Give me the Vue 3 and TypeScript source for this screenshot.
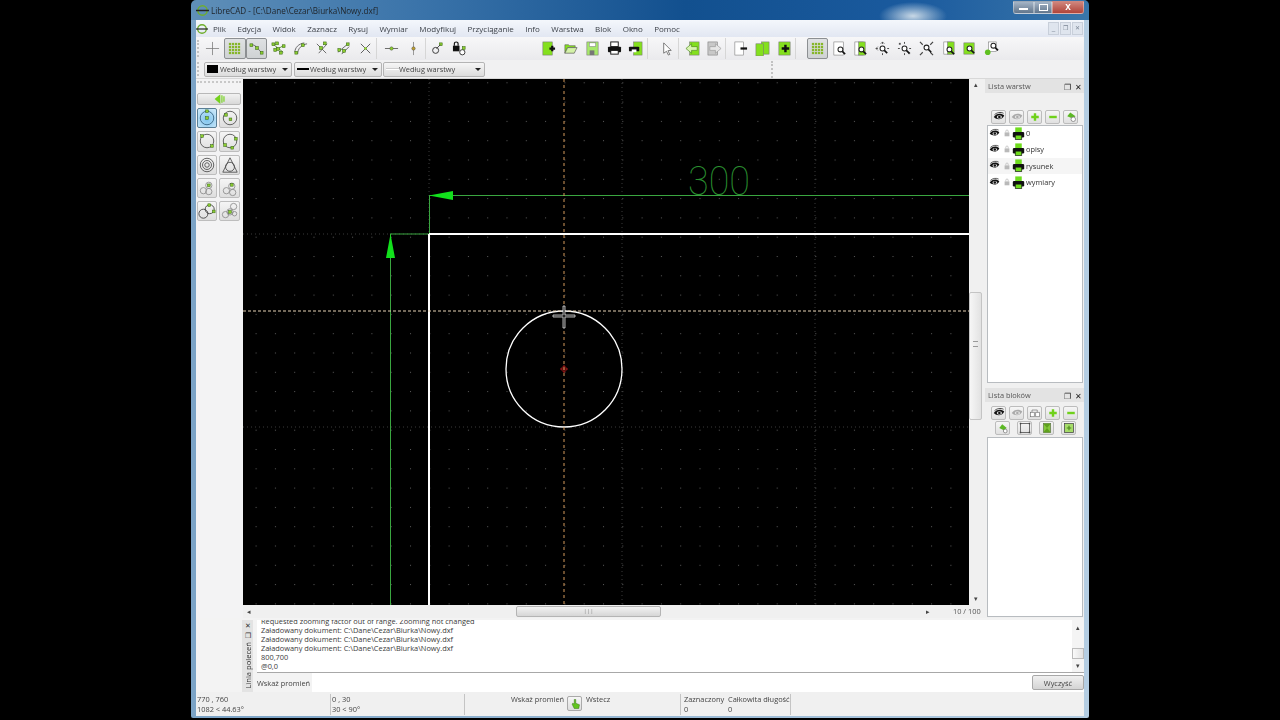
<template>
  <div class="page">
    <div class="window">
      <div class="titlebar">
        <svg class="app-ic" viewBox="0 0 14 14"><circle cx="7" cy="7" r="5" fill="none" stroke="#6fae2c" stroke-width="1.6" /><path d="M0 7h14" stroke="#222" stroke-width="1.6" /></svg>
        <span class="title-text">LibreCAD - [C:\Dane\Cezar\Biurka\Nowy.dxf]</span>
        <div class="win-btns">
          <span class="wb wb-min"><i></i></span>
          <span class="wb wb-max"><i></i></span>
          <span class="wb wb-close">x</span>
        </div>
      </div>

      <div class="menubar">
        <svg class="menu-ic" viewBox="0 0 14 14"><circle cx="7" cy="7" r="5" fill="none" stroke="#6fae2c" stroke-width="1.6" /><path d="M0 7h14" stroke="#222" stroke-width="1.4" /></svg>
        <span v-for="m in menus" :key="m" class="menu-item">{{ m }}</span>
        <div class="mdi-btns">
          <span class="mdi">_</span>
          <span class="mdi mdi-sm">❐</span>
          <span class="mdi mdi-sm">✕</span>
        </div>
      </div>

      <div class="toolbar">
        <i class="grip"></i>
        <template v-for="(group, gi) in toolGroups" :key="gi">
          <div class="tb-group" :class="group.cls">
            <span v-for="(t, ti) in group.items" :key="ti" class="tb" :class="{ on: t.startsWith('*') }">
              <svg viewBox="0 0 16 16" v-html="icons[t.replace('*', '')]"></svg>
            </span>
          </div>
        </template>
      </div>

      <div class="optbar">
        <i class="grip small"></i>
        <div class="combo c1"><span class="swatch"></span>Według warstwy<b class="caret"></b></div>
        <div class="combo c2"><span class="thick"></span>Według warstwy<b class="caret"></b></div>
        <div class="combo c3"><span class="thin"></span>Według warstwy<b class="caret"></b></div>
        <i class="grip vgrip"></i>
      </div>

      <div class="workspace">
        <aside class="left-tools">
          <div class="dots"></div>
          <button class="back-btn">
            <svg viewBox="0 0 16 12"><path d="M9 0v12L2 6z" fill="#74d11c" /><path d="M11 1.5v9M13.5 2.5v7" stroke="#74d11c" stroke-width="1.4" /></svg>
          </button>
          <div class="circle-grid">
            <span v-for="(c, i) in circleTools" :key="i" class="cbtn" :class="{ active: i === 0 }">
              <svg viewBox="0 0 20 20" v-html="c"></svg>
            </span>
          </div>
        </aside>

        <div class="center">
          <div class="canvas-row">
            <svg class="canvas" viewBox="0 0 726 526" width="726" height="526">
              <defs>
                <pattern id="gridDots" x="12.6" y="3.3" width="19.3" height="19.3" patternUnits="userSpaceOnUse">
                  <rect width="1" height="1" fill="#5c5c5c" />
                </pattern>
              </defs>
              <rect width="726" height="526" fill="#000" />
              <rect width="726" height="526" fill="url(#gridDots)" />
              <!-- meta grid -->
              <path d="M186 0V526M379 0V526M572 0V526M0 155H726M0 348H726" stroke="#3a3a3a" stroke-width="1" stroke-dasharray="1 3" fill="none" />
              <!-- dimensions -->
              <path d="M186 116.5H726M186.5 116V155M147 155H186M147.5 155V526" stroke="#3aa640" stroke-width="1" fill="none" />
              <path d="M186 116.5L210 112V121Z" fill="#12e01c" />
              <path d="M147.5 155L143 179H152Z" fill="#12e01c" />
              <text x="445" y="116" class="dim-text" textLength="62" lengthAdjust="spacingAndGlyphs">300</text>
              <!-- geometry -->
              <path d="M186 155H726M186 155V526" stroke="#fff" stroke-width="2" fill="none" />
              <circle cx="321" cy="290" r="58" fill="none" stroke="#fff" stroke-width="1.3" />
              <path d="M317 290h8M321 286v8" stroke="#a01818" stroke-width="1" />
              <circle cx="321" cy="290" r="2.5" fill="none" stroke="#a01818" stroke-width=".8" />
              <!-- crosshair -->
              <path d="M321 0V526" stroke="#d49a5c" stroke-width="1" stroke-dasharray="3 3" />
              <path d="M0 232H726" stroke="#e6d2b4" stroke-width="1" stroke-dasharray="3 2" />
              <path d="M320 227h2v9h10v2h-10v11h-2v-11h-10v-2h10z" fill="#222" stroke="#ddd" stroke-width=".8" />
            </svg>
            <div class="vscroll">
              <span class="arr">▴</span>
              <div class="v-track"><div class="v-thumb"><i></i></div></div>
              <span class="arr">▾</span>
            </div>
          </div>
          <div class="hscroll">
            <span class="harr">◂</span>
            <div class="h-track"><div class="h-thumb">|||</div></div>
            <span class="harr">▸</span>
            <span class="grid-label">10 / 100</span>
          </div>
        </div>

        <aside class="docks">
          <div class="dock-title">Lista warstw<span class="dock-btns"><em>❐</em><em>✕</em></span></div>
          <div class="dock-row first">
            <span v-for="b in layerBtns" :key="b" class="dbtn"><svg viewBox="0 0 16 16" v-html="icons[b]"></svg></span>
          </div>
          <ul class="layer-list">
            <li v-for="l in layers" :key="l" :class="{ hl: l === 'rysunek' }">
              <svg class="li-eye" viewBox="0 0 16 16" v-html="icons.eye"></svg>
              <svg class="li-lock" viewBox="0 0 10 12"><rect x="1" y="5" width="8" height="6.5" fill="#b9b9b9" /><path d="M3 5V3a2 2 0 0 1 4 0v2" fill="none" stroke="#b9b9b9" stroke-width="1.2" /></svg>
              <svg class="li-print" viewBox="0 0 16 16" v-html="icons.printer"></svg>
              <span>{{ l }}</span>
            </li>
          </ul>
          <div class="dock-title second">Lista bloków<span class="dock-btns"><em>❐</em><em>✕</em></span></div>
          <div class="dock-row blocks">
            <span v-for="b in blockBtns1" :key="b" class="dbtn"><svg viewBox="0 0 16 16" v-html="icons[b]"></svg></span>
          </div>
          <div class="dock-row wide">
            <span v-for="b in blockBtns2" :key="b" class="dbtn"><svg viewBox="0 0 16 16" v-html="icons[b]"></svg></span>
          </div>
          <div class="block-list"></div>
        </aside>
      </div>

      <section class="cmd">
        <div class="cmd-strip">
          <span class="cmd-x">✕</span>
          <span class="cmd-r">❐</span>
          <span class="cmd-name">Linia poleceń</span>
        </div>
        <div class="cmd-main">
          <div class="log-wrap">
            <div class="log">
              <div v-for="(line, i) in logLines" :key="i">{{ line }}</div>
            </div>
            <div class="log-scroll">
              <span class="arr">▴</span>
              <div class="log-track"><div class="log-thumb"></div></div>
              <span class="arr">▾</span>
            </div>
          </div>
          <div class="input-row">
            <span class="prompt">Wskaż promień</span>
            <div class="input"></div>
            <button class="clear">Wyczyść</button>
          </div>
        </div>
      </section>

      <footer class="status">
        <div class="cell c-abs">770 , 760<br />1082 &lt; 44.63°</div>
        <div class="cell c-rel">0 , 30<br />30 &lt; 90°</div>
        <div class="cell c-mouse">
          <span class="mouse-left">Wskaż promień</span>
          <span class="mouse-btn"><svg viewBox="0 0 16 16" v-html="icons.hand"></svg></span>
          <span>Wstecz</span>
        </div>
        <div class="cell c-sel">
          <div class="sel-col first">Zaznaczony<br />0</div>
          <div class="sel-col">Całkowita długość<br />0</div>
        </div>
      </footer>
    </div>
  </div>
</template>

<script setup lang="ts">
const menus = ['Plik', 'Edycja', 'Widok', 'Zaznacz', 'Rysuj', 'Wymiar', 'Modyfikuj', 'Przyciąganie', 'Info', 'Warstwa', 'Blok', 'Okno', 'Pomoc']

const dot = (x: number, y: number) =>
  `<rect x="${x}" y="${y}" width="3" height="3" fill="#8ccf2e" stroke="#3d6a1c" stroke-width=".6"/>`
const ln = (d: string, c = '#555', w = 0.9) =>
  `<path d="${d}" fill="none" stroke="${c}" stroke-width="${w}"/>`
const mag = (x: number, y: number) =>
  `<circle cx="${x}" cy="${y}" r="2.6" fill="#fff" stroke="#222" stroke-width="1.1"/><path d="M${x + 2} ${y + 2}l3 3" stroke="#111" stroke-width="1.7"/>`
const page = (x: number, y: number, w: number, h: number, f: string) =>
  `<rect x="${x}" y="${y}" width="${w}" height="${h}" fill="${f}" stroke="#777" stroke-width=".6"/>`
const plus = (c: string) => `<path d="M8 3v10M3 8h10" stroke="${c}" stroke-width="3.2"/>`
const rays = ln('M1 8h2M13 8h2M8 1v2M8 13v2', '#444', 1)

const gridDots = (c: string) => {
  let s = ''
  for (let r = 0; r < 4; r++) for (let k = 0; k < 4; k++) s += `<rect x="${2 + k * 3.2}" y="${2 + r * 3.2}" width="2.4" height="2.4" fill="${c}"/>`
  return s
}

const icons: Record<string, string> = {
  free: ln('M8 1v14M1 8h14', '#777', 0.8),
  grid: gridDots('#86b62a'),
  snapEnd: ln('M3 4c4 0 6 4 10 8', '#555') + dot(1, 3) + dot(7, 6) + dot(12, 11),
  snapEnt: ln('M3 4l5 4 5 4M8 8l5-3', '#4c8a1c') + dot(1, 2) + dot(5, 1) + dot(6, 7) + dot(12, 4) + dot(9, 11) + dot(3, 8),
  snapCen: ln('M5 14c0-6 4-10 10-11M2 12c0-5 4-9 10-10', '#555') + dot(9, 3) + dot(2, 11),
  snapMid: ln('M3 3l10 10M14 3L5 13', '#555') + dot(6, 6) + dot(10, 1),
  snapDist: ln('M2 12L14 2M6 14L14 6', '#555') + dot(2, 8) + dot(7, 9) + dot(11, 2),
  snapX: ln('M3 3l10 10M13 3L3 13', '#555', 1) + `<circle cx="8" cy="8" r="1.4" fill="#8ccf2e"/>`,
  hLine: ln('M1 8h14', '#555') + `<circle cx="8" cy="8" r="1.8" fill="#8ccf2e" stroke="#444" stroke-width=".5"/>`,
  vLine: ln('M8 1v14', '#888') + `<circle cx="8" cy="8" r="1.8" fill="#c0a030" stroke="#444" stroke-width=".5"/>`,
  rel: `<circle cx="6" cy="10" r="3.2" fill="none" stroke="#333"/>` + dot(10, 2) + ln('M7 8l4-4', '#333'),
  lock: `<rect x="1" y="5" width="7" height="6" fill="#111"/><path d="M2.5 5V3a2 2 0 0 1 4 0v2" fill="none" stroke="#111" stroke-width="1.2"/><circle cx="11" cy="12" r="2.8" fill="#fff" stroke="#333"/>` + dot(11, 6),
  newDoc: page(2, 1, 10, 14, '#84e01e') + `<path d="M9 8h6M12 5v6" stroke="#111" stroke-width="2.4"/>`,
  open: `<path d="M2 4h4l1 1h6v2H5L2 13z" fill="#84e01e" stroke="#555" stroke-width=".6"/><path d="M5 7h10l-3 6H2z" fill="#d4f2a8" stroke="#555" stroke-width=".7"/>`,
  save: page(2, 1, 12, 14, '#a6e86a') + `<rect x="4.5" y="2" width="7" height="4" fill="#fff" stroke="#666" stroke-width=".5"/><rect x="5" y="10" width="5" height="5" fill="#777"/>`,
  print: `<rect x="4" y="1" width="8" height="5" fill="#fff" stroke="#111"/><rect x="1" y="6" width="14" height="6" rx="1" fill="#111"/><rect x="4" y="10" width="8" height="4" fill="#fff" stroke="#111"/>`,
  preview: page(6, 1, 9, 14, '#84e01e') + `<rect x="1" y="6" width="11" height="5" rx="1" fill="#111"/><rect x="4" y="9" width="5" height="3" fill="#fff"/>`,
  pointer: `<path d="M5 2v11l3-2 2 4 1.5-.7-2-4 3.5-.3z" fill="#fff" stroke="#555" stroke-width=".8"/>`,
  prevW: page(5, 1, 10, 14, '#84e01e') + `<path d="M1 8l6-5v3h6v4H7v3z" fill="#d8f4b0" stroke="#4a8a1a" stroke-width=".7"/>`,
  nextW: page(1, 1, 10, 14, '#c8c8c8') + `<path d="M15 8L9 3v3H3v4h6v3z" fill="#e6e6e6" stroke="#999" stroke-width=".7"/>`,
  docMinus: page(2, 1, 9, 14, '#fff') + `<path d="M8 8h7" stroke="#111" stroke-width="2.4"/>`,
  docs: page(7, 1, 8, 13, '#84e01e') + page(1, 3, 8, 13, '#84e01e'),
  docPlus: page(2, 1, 12, 14, '#84e01e') + `<path d="M5 8h8M9 4v8" stroke="#111" stroke-width="2.6"/>`,
  zoomPage: page(2, 1, 10, 14, '#fff') + mag(9, 9),
  zoomGreen: page(2, 1, 9, 14, '#fff') + page(6, 1, 7, 14, '#84e01e') + mag(9, 9),
  zoomIn: rays + ln('M1 8l2-2M1 8l2 2M8 1L6 3M8 1l2 2', '#555', 0.8) + mag(8, 8),
  zoomOut: rays + `<rect x="2" y="2" width="2" height="2" fill="#555"/><rect x="12" y="12" width="2" height="2" fill="#555"/>` + mag(8, 8),
  zoomFit: ln('M1 1l3 3M15 1l-3 3M1 15l3-3M15 15l-3-3', '#444', 1.2) + mag(8, 7),
  zoomWin: page(3, 1, 9, 13, '#fff') + page(7, 1, 7, 13, '#84e01e') + mag(9, 9),
  zoomPrev: page(2, 2, 11, 12, '#84e01e') + mag(8, 8),
  zoomPan: page(5, 1, 8, 10, '#fff') + `<circle cx="4" cy="12" r="3" fill="#5fbf20"/>` + mag(10, 5),
  eye: `<path d="M1 8c3-5 10-6 14-2-2 5-9 7-14 2z" fill="#111"/><ellipse cx="8.5" cy="8" rx="3.5" ry="2.3" fill="#ddd"/><circle cx="8.5" cy="8" r="1.7" fill="#111"/><path d="M2 5c3-3 8-4 12-2" stroke="#111" fill="none"/>`,
  eyeOff: `<path d="M1 8c3-5 10-6 14-2-2 5-9 7-14 2z" fill="#aaa"/><ellipse cx="8.5" cy="8" rx="3.5" ry="2.3" fill="#e6e6e6"/><circle cx="8.5" cy="8" r="1.7" fill="#aaa"/>`,
  plusG: plus('#6fd11b'),
  minusG: `<path d="M3 8h10" stroke="#6fd11b" stroke-width="3.2"/>`,
  attr: `<path d="M3 7l4-5 7 5-4 3z" fill="#5cb825"/><circle cx="11" cy="11" r="3" fill="#fff" stroke="#777"/>`,
  printer: `<rect x="4" y="0.5" width="8" height="7" fill="#6fdc1e"/><rect x="1" y="6" width="14" height="7" rx="1.5" fill="#111"/><rect x="4" y="10" width="8" height="5.5" fill="#6fdc1e" stroke="#111" stroke-width=".8"/>`,
  link: `<rect x="2" y="7" width="5" height="6" fill="#fff" stroke="#666" stroke-width=".8"/><rect x="9" y="7" width="5" height="6" fill="#fff" stroke="#666" stroke-width=".8"/><path d="M4 7V4h7v3" fill="none" stroke="#666" stroke-width=".8"/>`,
  blockA: `<path d="M3 8l4-5 6 5-4 3z" fill="#5cb825"/><circle cx="11" cy="12" r="2.5" fill="#fff" stroke="#777"/>`,
  blockB: `<rect x="2" y="2" width="12" height="12" fill="none" stroke="#444"/><rect x="1" y="1" width="2" height="2" fill="#444"/><rect x="13" y="1" width="2" height="2" fill="#444"/><rect x="1" y="13" width="2" height="2" fill="#444"/><rect x="13" y="13" width="2" height="2" fill="#444"/>`,
  blockC: `<rect x="3" y="2" width="10" height="12" fill="#84c83c" stroke="#555" stroke-width=".7"/><path d="M3 2h10L8 8zM3 14h10L8 8z" fill="#5fa01e"/>`,
  blockD: `<rect x="2" y="2" width="12" height="12" fill="#a6dd6a" stroke="#444"/><path d="M5 8h6M8 5v6" stroke="#4a8a1a" stroke-width="1.5"/>`,
  hand: `<path d="M7 2v6l-2-1-1 1 3 6h6l1-5-5-2V2z" fill="#62c61e" stroke="#2f6a10" stroke-width=".6"/>`,
}

const toolGroups = [
  { cls: 'g1', items: ['free', '*grid', '*snapEnd', 'snapEnt', 'snapCen', 'snapMid', 'snapDist', 'snapX'] },
  { cls: 'g2', items: ['hLine', 'vLine'] },
  { cls: 'g3', items: ['rel', 'lock'] },
  { cls: 'g4', items: ['newDoc', 'open', 'save', 'print', 'preview'] },
  { cls: 'g5', items: ['pointer'] },
  { cls: 'g6', items: ['prevW', 'nextW'] },
  { cls: 'g7', items: ['docMinus', 'docs', 'docPlus'] },
  { cls: 'g8', items: ['*grid', 'zoomPage', 'zoomGreen', 'zoomIn', 'zoomOut', 'zoomFit', 'zoomWin', 'zoomPrev', 'zoomPan'] },
]

const circ = (cx: number, cy: number, r: number, c = '#444') =>
  `<circle cx="${cx}" cy="${cy}" r="${r}" fill="none" stroke="${c}" stroke-width=".9"/>`

const circleTools = [
  circ(10, 10, 7.5, '#2c5a7a') + dot(8.5, 1) + dot(8.5, 8.5),
  circ(10, 10, 7.5) + dot(4, 5) + dot(9, 10),
  circ(10, 10, 7.5) + dot(3, 3) + dot(14, 14),
  circ(10, 10, 7.5) + dot(15, 6) + dot(3, 13) + dot(11, 16),
  circ(10, 10, 7.5) + circ(10, 10, 5) + circ(10, 10, 2.5),
  ln('M10 2L2 18H18Z', '#444') + circ(10, 12, 5),
  circ(6, 13, 3.5, '#888') + circ(12, 14, 3.5, '#888') + circ(12, 7, 3.5, '#888') + dot(10.5, 5.5),
  circ(6, 13, 3.5, '#888') + circ(13, 15, 3.5, '#888') + circ(12, 8, 3.5, '#888') + dot(10.5, 5),
  circ(6, 13, 5, '#333') + circ(13, 8, 5, '#333') + dot(11, 2) + dot(16, 9),
  circ(5, 14, 3.5, '#888') + circ(14, 5, 3.5, '#888') + circ(10, 11, 3.5, '#888') + circ(15, 13, 2.5, '#888') + dot(8.5, 9.5),
]

const layerBtns = ['eye', 'eyeOff', 'plusG', 'minusG', 'attr']
const blockBtns1 = ['eye', 'eyeOff', 'link', 'plusG', 'minusG']
const blockBtns2 = ['blockA', 'blockB', 'blockC', 'blockD']
const layers = ['0', 'opisy', 'rysunek', 'wymiary']

const logLines = [
  'Requested zooming factor out of range. Zooming not changed',
  'Załadowany dokument: C:\\Dane\\Cezar\\Biurka\\Nowy.dxf',
  'Załadowany dokument: C:\\Dane\\Cezar\\Biurka\\Nowy.dxf',
  'Załadowany dokument: C:\\Dane\\Cezar\\Biurka\\Nowy.dxf',
  '800,700',
  '@0,0',
]
</script>

<style>
html, body {
  margin: 0;
  background: #000;
}
</style>

<style scoped>
.page {
  width: 1280px;
  height: 720px;
  background: #000;
  overflow: hidden;
  padding-left: 191px;
  box-sizing: border-box;
}

/* source is a soft video frame */
.window {
  width: 898px;
  height: 718px;
  box-sizing: border-box;
  padding: 0 5px 2px;
  border-radius: 5px 5px 2px 2px;
  background:
    radial-gradient(ellipse 34px 14px at 722px 16px, #c8d8e6 0, rgba(200, 216, 230, 0) 100%),
    linear-gradient(90deg, #5f8fb8 0, #3b74aa 25%, #12508f 55%, #1a5a9e 80%, #3a76aa 100%) top / 100% 20px no-repeat,
    linear-gradient(90deg, #7ba3c6 0, #b4cde2 100%);
  font-family: "Open Sans", "Liberation Sans", sans-serif;
  font-size: 7.4px;
  color: #333;
  display: flex;
  flex-direction: column;
  filter: blur(.3px);
}

.titlebar {
  height: 20px;
  display: flex;
  align-items: center;
}
.app-ic {
  width: 13px;
  height: 13px;
  margin-right: 2px;
}
.title-text {
  color: #20262c;
  font-size: 8.1px;
}
.win-btns {
  margin-left: auto;
  margin-top: -6px;
  display: flex;
  height: 13px;
}
.wb {
  display: flex;
  align-items: center;
  justify-content: center;
  border: 1px solid rgba(255, 255, 255, .35);
  box-sizing: border-box;
}
.wb-min {
  width: 21px;
  background: linear-gradient(#a4b4c6, #62768c);
  border-radius: 0 0 0 3px;
}
.wb-min i {
  width: 9px;
  height: 2px;
  background: #fff;
  margin-top: 4px;
}
.wb-max {
  width: 18px;
  background: linear-gradient(#a4b4c6, #62768c);
}
.wb-max i {
  width: 7px;
  height: 5px;
  border: 1px solid #fff;
}
.wb-close {
  width: 32px;
  background: linear-gradient(#cf857c, #b0443a);
  border-radius: 0 0 3px 0;
  color: #fff;
  font: bold 10px "Liberation Sans", sans-serif;
  line-height: 8px;
}

.menubar {
  height: 17px;
  display: flex;
  align-items: center;
  gap: 11.4px;
  font-size: 8px;
  background: linear-gradient(#f4f7fc, #e2e7f2);
}
.menu-ic {
  width: 12px;
  height: 12px;
  margin-right: -6.4px;
}
.menu-item {
  color: #3a3f47;
}
.mdi-btns {
  margin-left: auto;
  display: flex;
  gap: 1px;
  margin-right: 1px;
}
.mdi {
  width: 11px;
  height: 13px;
  background: #dfe5ee;
  border: 1px solid #c8cfda;
  box-sizing: border-box;
  color: #7a8594;
  font-size: 8px;
  line-height: 10px;
  text-align: center;
}
.mdi-sm {
  font-size: 6px;
}

.toolbar {
  height: 23px;
  display: flex;
  align-items: center;
  background: linear-gradient(#f7f7f8, #eaeaed);
}
.grip {
  width: 1px;
  height: 17px;
  border-left: 2px dotted #c2c2c2;
  display: block;
  margin-left: 1px;
}
.grip.small {
  height: 14px;
}
.tb-group {
  display: flex;
  border-right: 1px solid #d6d6d6;
  height: 21px;
  align-items: center;
}
.g1 {
  margin-left: 2.1px;
}
.g2 {
  margin-left: 3.6px;
}
.g3 {
  margin-left: 1px;
  border-right: none;
}
.g4 {
  margin-left: 67.5px;
}
.g5 {
  margin-left: 8px;
}
.g6 {
  margin-left: 3px;
}
.g7 {
  margin-left: 3.4px;
}
.g8 {
  margin-left: 10.6px;
  border-right: none;
}
.tb {
  width: 21.8px;
  height: 21px;
  box-sizing: border-box;
  display: flex;
  align-items: center;
  justify-content: center;
}
.tb svg {
  width: 15px;
  height: 15px;
}
.tb.on {
  border: 1px solid #8c8f92;
  border-radius: 2px;
  background: linear-gradient(#dfe1e3, #cfd2d4);
}

.optbar {
  height: 18px;
  display: flex;
  align-items: center;
  background: #f1f1f2;
}
.combo {
  height: 15px;
  margin-left: 2px;
  box-sizing: border-box;
  border: 1px solid #b4b4b4;
  border-radius: 2px;
  background: linear-gradient(#f6f6f6, #dcdcdc);
  display: flex;
  align-items: center;
  color: #444;
  padding-left: 2px;
  position: relative;
}
.c1 {
  width: 88px;
  margin-left: 4px;
}
.c2 {
  width: 88px;
}
.c3 {
  width: 102px;
  margin-left: 1px;
}
.swatch {
  width: 11px;
  height: 8px;
  background: #000;
  margin-right: 2px;
}
.thick {
  width: 12px;
  height: 2px;
  background: #000;
  margin-right: 1px;
}
.thin {
  width: 13px;
  height: 1px;
  background: #fff;
  border-top: 1px solid #ccc;
}
.caret {
  position: absolute;
  right: 3px;
  top: 5px;
  border-left: 3px solid transparent;
  border-right: 3px solid transparent;
  border-top: 3px solid #222;
}
.vgrip {
  margin-left: 286px;
}

.workspace {
  height: 540px;
  display: flex;
  background: #f0f0f0;
  border-top: 1px solid #d8d8d8;
  box-sizing: border-box;
}
.left-tools {
  width: 47px;
  padding-left: 1px;
  box-sizing: border-box;
  background: #f3f3f4;
}
.dots {
  height: 2px;
  width: 44px;
  margin-top: 2px;
  border-top: 2px dotted #c8c8c8;
  box-sizing: border-box;
}
.back-btn {
  display: flex;
  align-items: center;
  justify-content: center;
  width: 44px;
  height: 12px;
  margin-top: 10px;
  padding: 0;
  border: 1px solid #b8b8b8;
  border-radius: 2px;
  background: linear-gradient(#f2f2f2, #d8d8d8);
}
.back-btn svg {
  width: 13px;
  height: 10px;
}
.circle-grid {
  display: grid;
  grid-template-columns: 20px 21px;
  grid-auto-rows: 20.3px;
  gap: 3px 2px;
  margin-top: 3px;
}
.cbtn {
  display: flex;
  align-items: center;
  justify-content: center;
  box-sizing: border-box;
  border: 1px solid #bdbdbd;
  border-radius: 2px;
  background: linear-gradient(#f5f5f5, #dedede);
}
.cbtn svg {
  width: 18px;
  height: 18px;
}
.cbtn.active {
  border-color: #5a7f96;
  background: radial-gradient(circle at 50% 60%, #7ec4ee, #d4ecfa);
}

.center {
  width: 739px;
  display: flex;
  flex-direction: column;
}
.canvas-row {
  display: flex;
  height: 526px;
}
.canvas {
  display: block;
  flex: none;
}
.dim-text {
  font-family: Roboto, "Liberation Sans", sans-serif;
  font-weight: 100;
  font-size: 41px;
  fill: #2a9030;
}
.vscroll {
  width: 13px;
  display: flex;
  flex-direction: column;
  align-items: center;
  background: #f0f0f0;
}
.arr {
  height: 12px;
  font-size: 7px;
  line-height: 12px;
  color: #444;
  flex: none;
}
.v-track {
  flex: 1;
  width: 100%;
  padding-top: 201px;
  box-sizing: border-box;
}
.v-thumb {
  height: 128px;
  border: 1px solid #c4c4c4;
  border-radius: 2px;
  background: linear-gradient(90deg, #f6f6f6, #e2e2e2);
  display: flex;
  justify-content: center;
  box-sizing: border-box;
}
.v-thumb i {
  width: 5px;
  height: 4px;
  margin-top: 48px;
  border-top: 1px solid #999;
  border-bottom: 1px solid #999;
}
.hscroll {
  height: 12px;
  display: flex;
  align-items: center;
  background: #f0f0f0;
  color: #444;
}
.harr {
  width: 11px;
  flex: none;
  font-size: 7px;
  text-align: center;
}
.h-track {
  width: 668px;
  padding-left: 262px;
  box-sizing: border-box;
}
.h-thumb {
  width: 145px;
  height: 11px;
  border: 1px solid #b4b4b4;
  border-radius: 2px;
  background: linear-gradient(#f2f2f2, #d6d6d6);
  box-sizing: border-box;
  font-size: 6px;
  line-height: 8px;
  text-align: center;
  color: #888;
}
.grid-label {
  margin-left: 20px;
  white-space: nowrap;
  color: #555;
}

.docks {
  width: 99px;
  margin-left: 3px;
  display: flex;
  flex-direction: column;
}
.dock-title {
  height: 14px;
  background: #e3e3e3;
  display: flex;
  align-items: center;
  padding-left: 3px;
  color: #555;
  flex: none;
}
.dock-title.second {
  margin-top: 5px;
}
.dock-btns {
  margin-left: auto;
  display: flex;
  gap: 4px;
  padding-right: 2px;
  color: #222;
}
.dock-btns em {
  font-style: normal;
  font-size: 8px;
}
.dock-row {
  display: flex;
  justify-content: center;
  gap: 3px;
  margin-top: 3px;
  flex: none;
}
.dock-row.first {
  margin-top: 17px;
}
.dock-row.blocks {
  margin-top: 4px;
}
.dock-row.wide {
  gap: 7px;
  margin-top: 1px;
  padding-left: 2px;
}
.dbtn {
  width: 15px;
  height: 14px;
  box-sizing: border-box;
  border: 1px solid #bcbcbc;
  border-radius: 2px;
  background: linear-gradient(#f6f6f6, #e0e0e0);
  display: flex;
  align-items: center;
  justify-content: center;
}
.dbtn svg {
  width: 12px;
  height: 12px;
}
.layer-list {
  list-style: none;
  margin: 1px 1px 0 2px;
  padding: 0;
  height: 258px;
  box-sizing: border-box;
  background: #fff;
  border: 1px solid #b8bcc0;
  flex: none;
}
.layer-list li {
  height: 16.3px;
  display: flex;
  align-items: center;
  padding-left: 1px;
  color: #333;
}
.layer-list li:first-child {
  margin-top: -1px;
}
.layer-list li.hl {
  background: #f5f5f5;
}
.li-eye {
  width: 11px;
  height: 11px;
}
.li-lock {
  width: 6px;
  height: 8px;
  margin-left: 4px;
}
.li-print {
  width: 13px;
  height: 13px;
  margin-left: 2px;
  margin-right: 1px;
}
.block-list {
  margin: 2px 1px 1px 2px;
  flex: 1;
  background: #fff;
  border: 1px solid #b8bcc0;
}

.cmd {
  height: 74px;
  padding: 2px 0 0 46px;
  box-sizing: border-box;
  display: flex;
  background: #f3f3f3;
}
.cmd-strip {
  width: 11px;
  flex: none;
  background: #e3e3e3;
  display: flex;
  flex-direction: column;
  align-items: center;
  color: #333;
}
.cmd-x {
  font-size: 7px;
  line-height: 11px;
}
.cmd-r {
  font-size: 7px;
  line-height: 10px;
}
.cmd-name {
  writing-mode: vertical-rl;
  transform: rotate(180deg);
  font-size: 7.6px;
  margin-top: 1px;
}
.cmd-main {
  flex: 1;
  margin-left: 4px;
  display: flex;
  flex-direction: column;
  min-width: 0;
}
.log-wrap {
  height: 53px;
  display: flex;
  background: #fff;
  border-bottom: 1px solid #a8a8a8;
  box-sizing: border-box;
}
.log {
  flex: 1;
  overflow: hidden;
  display: flex;
  flex-direction: column;
  justify-content: flex-end;
  padding: 0 0 1px 4px;
  line-height: 9px;
  color: #3a3a3a;
  white-space: nowrap;
}
.log-scroll {
  width: 12px;
  display: flex;
  flex-direction: column;
  align-items: center;
  background: #f4f4f4;
  padding-top: 2px;
}
.log-track {
  flex: 1;
  width: 100%;
  padding-top: 14px;
  box-sizing: border-box;
}
.log-thumb {
  height: 11px;
  border: 1px solid #bbb;
  background: linear-gradient(90deg, #fafafa, #e2e2e2);
  box-sizing: border-box;
}
.input-row {
  flex: 1;
  display: flex;
  align-items: center;
  background: #fff;
}
.prompt {
  width: 55px;
  align-self: stretch;
  background: #f3f3f3;
  display: flex;
  align-items: center;
  white-space: nowrap;
  color: #444;
}
.input {
  flex: 1;
}
.clear {
  width: 52px;
  height: 15px;
  padding: 0;
  border: 1px solid #a8a8a8;
  border-radius: 2px;
  background: linear-gradient(#f0f0f0, #d4d4d4);
  font: inherit;
  color: #444;
}

.status {
  height: 24px;
  padding-top: 2px;
  box-sizing: border-box;
  display: flex;
  background: #f0f0f0;
  line-height: 10px;
  color: #444;
}
.cell {
  box-sizing: border-box;
  height: 21px;
  border-right: 1px solid #c4c4c4;
  white-space: nowrap;
  flex: none;
}
.c-abs {
  width: 135px;
  padding-left: 1px;
}
.c-rel {
  width: 134px;
  padding-left: 1px;
}
.c-mouse {
  width: 216px;
  padding-left: 46px;
  display: flex;
  align-items: flex-start;
}
.mouse-left {
  width: 51px;
  flex: none;
}
.mouse-btn {
  width: 15px;
  height: 15px;
  margin: 2px 4px 0 5px;
  box-sizing: border-box;
  border: 1px solid #aaa;
  border-radius: 2px;
  background: linear-gradient(#f6f6f6, #dedede);
  display: flex;
  align-items: center;
  justify-content: center;
}
.mouse-btn svg {
  width: 12px;
  height: 12px;
}
.c-sel {
  width: 110px;
  padding-left: 3px;
  display: flex;
}
.sel-col.first {
  width: 44px;
  flex: none;
}
</style>
